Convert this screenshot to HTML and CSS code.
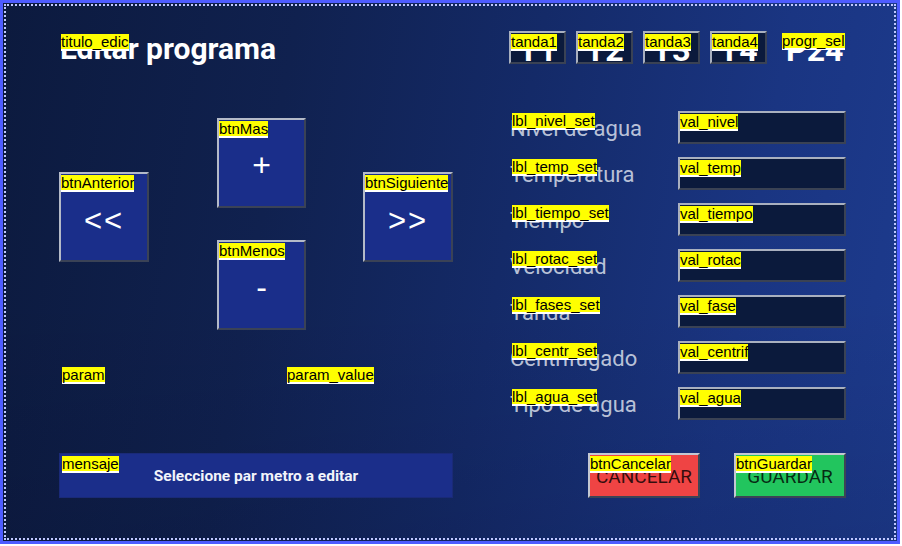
FILE: index.html
```html
<!DOCTYPE html>
<html lang="es">
<head>
<meta charset="utf-8">
<title>Editar programa</title>
<link rel="stylesheet" href="styles.css">
</head>
<body>
<div class="screen">
  <div class="title w plain"><span class="tag">titulo_edic</span>Editar programa</div>

  <div class="tandas">
    <div class="tanda w"><span class="tag">tanda1</span>T1</div>
    <div class="tanda w"><span class="tag">tanda2</span>T2</div>
    <div class="tanda w"><span class="tag">tanda3</span>T3</div>
    <div class="tanda w"><span class="tag">tanda4</span>T4</div>
    <div class="progr w plain"><span class="tag">progr_sel</span>P24</div>
  </div>

  <div class="left-body">
    <div class="cluster">
      <div class="col col-side">
        <div class="btn w"><span class="tag">btnAnterior</span><span class="sym arrows">&lt;&lt;</span></div>
      </div>
      <div class="col col-mid">
        <div class="btn btn-mid w"><span class="tag">btnMas</span><span class="sym">+</span></div>
        <div class="btn btn-mid w"><span class="tag">btnMenos</span><span class="sym">-</span></div>
      </div>
      <div class="col col-side">
        <div class="btn w"><span class="tag">btnSiguiente</span><span class="sym arrows">&gt;&gt;</span></div>
      </div>
    </div>
    <div class="params">
      <div class="param w plain"><span class="tag">param</span></div>
      <div class="param param-value w plain"><span class="tag">param_value</span></div>
    </div>
  </div>

  <div class="right-body">
    <div class="row"><div class="label w plain"><span class="tag">lbl_nivel_set</span>Nivel de agua</div><div class="val w"><span class="tag">val_nivel</span></div></div>
    <div class="row"><div class="label w plain"><span class="tag">lbl_temp_set</span>Temperatura</div><div class="val w"><span class="tag">val_temp</span></div></div>
    <div class="row"><div class="label w plain"><span class="tag">lbl_tiempo_set</span>Tiempo</div><div class="val w"><span class="tag">val_tiempo</span></div></div>
    <div class="row"><div class="label w plain"><span class="tag">lbl_rotac_set</span>Velocidad</div><div class="val w"><span class="tag">val_rotac</span></div></div>
    <div class="row"><div class="label w plain"><span class="tag">lbl_fases_set</span>Tanda</div><div class="val w"><span class="tag">val_fase</span></div></div>
    <div class="row"><div class="label w plain"><span class="tag">lbl_centr_set</span>Centrifugado</div><div class="val w"><span class="tag">val_centrif</span></div></div>
    <div class="row"><div class="label w plain"><span class="tag">lbl_agua_set</span>Tipo de agua</div><div class="val w"><span class="tag">val_agua</span></div></div>
  </div>

  <div class="mensaje w"><span class="tag">mensaje</span>Seleccione par metro a editar</div>

  <div class="actions">
    <div class="act cancel w"><span class="tag">btnCancelar</span>CANCELAR</div>
    <div class="act save w"><span class="tag">btnGuardar</span>GUARDAR</div>
  </div>
</div>
</body>
</html>
```
FILE: styles.css
```css
* { box-sizing: border-box; }

html, body {
  margin: 0;
  padding: 0;
  background: #ffffff;
}

.screen {
  width: 900px;
  height: 544px;
  border: 3px solid #4e5cff;
  outline: 2px dotted #c0c8ff;
  outline-offset: -6px;
  background:
    linear-gradient(to bottom, rgba(0, 0, 20, 0) 55%, rgba(0, 0, 20, 0.12) 100%),
    linear-gradient(100deg, #0c1a3e 0%, #10214f 30%, #142a68 55%, #1a3582 80%, #1d3b8e 100%);
  display: grid;
  grid-template-columns: 394px 337px;
  grid-template-rows: 33px 389px 45px;
  column-gap: 56px;
  padding: 28px 0 0 56px;
  font-family: Roboto, "Liberation Sans", sans-serif;
  color: #ffffff;
}

/* designer name tags */
.w { position: relative; }
.tag {
  position: absolute;
  top: 1px;
  left: 0;
  background: #ffff00;
  color: #000000;
  font: 400 15px/15px "Liberation Sans", Arial, sans-serif;
  border-bottom: 2px solid #ffffff;
  white-space: nowrap;
  z-index: 2;
}
.plain > .tag { top: 0; left: 2px; }

/* header */
.title {
  margin-top: 3px;
  padding-left: 1px;
  font-weight: 700;
  font-size: 30px;
  line-height: 30px;
  white-space: nowrap;
}

.tandas {
  display: flex;
  gap: 10px;
  align-items: flex-start;
}
.tanda {
  flex: 0 0 57px;
  height: 33px;
  background: #0b1a3c;
  border: 2px solid;
  border-color: #a9b0bf #3a4254 #3a4254 #a9b0bf;
  display: flex;
  align-items: center;
  justify-content: center;
  padding-top: 4px;
  font-weight: 700;
  font-size: 32px;
  line-height: 1;
}
.progr {
  flex: 0 0 auto;
  margin-left: 3px;
  height: 33px;
  padding: 4px 0 0 6px;
  display: flex;
  align-items: center;
  font-weight: 700;
  font-size: 32px;
  line-height: 1;
}
.progr > .tag { top: 2px; left: 2px; }

/* left body */
.left-body {
  display: flex;
  flex-direction: column;
}
.cluster {
  display: flex;
  align-items: flex-start;
  margin-top: 54px;
}
.col { display: flex; flex-direction: column; }
.col-side { margin-top: 54px; }
.col-mid { gap: 32px; margin: 0 57px 0 68px; }

.btn {
  width: 90px;
  height: 90px;
  background: #1a2e8a;
  border: 2px solid;
  border-color: #b4bac8 #3a4256 #3a4256 #b4bac8;
  display: flex;
  align-items: center;
  justify-content: center;
  font-family: "Liberation Sans", Arial, sans-serif;
  color: #ffffff;
}
.btn-mid { width: 89px; }
.sym {
  font-size: 32px;
  line-height: 1;
  padding-top: 4px;
}
.arrows {
  font-size: 31px;
  letter-spacing: 2px;
  padding-top: 6px;
}

.params {
  display: flex;
  margin-top: 35px;
}
.param {
  height: 20px;
  width: 60px;
}
.param > .tag { left: 3px; top: 2px; }
.param-value { margin-left: 165px; width: 120px; }

/* right body */
.right-body {
  display: flex;
  flex-direction: column;
  gap: 13px;
  padding-top: 47px;
}
.row {
  display: flex;
  height: 33px;
  align-items: flex-start;
}
.label {
  width: 169px;
  height: 33px;
  padding: 5px 0 0 1px;
  font-size: 22px;
  line-height: 26px;
  color: rgba(222, 226, 238, 0.84);
  white-space: nowrap;
}
.label > .tag { top: 2px; left: 3px; }
.val {
  width: 168px;
  height: 33px;
  background: #0b1a3c;
  border: 2px solid;
  border-color: #a9b0bf #3a4254 #3a4254 #a9b0bf;
}
.val > .tag { top: 1px; left: 0; }

/* footer */
.mensaje {
  height: 45px;
  background: #1b2e8a;
  border: 1px solid #1a2a78;
  display: flex;
  align-items: center;
  justify-content: center;
  font-weight: 700;
  font-size: 15.5px;
  color: #f2f4fa;
}
.mensaje > .tag { top: 2px; left: 2px; }

.actions {
  display: flex;
  justify-content: flex-end;
  gap: 34px;
}
.act {
  width: 112px;
  height: 45px;
  border: 2px solid;
  border-color: #c4c8d2 #3c4456 #3c4456 #c4c8d2;
  display: flex;
  align-items: center;
  justify-content: center;
  font-size: 19px;
  color: rgba(0, 0, 0, 0.8);
  padding-top: 2px;
}
.cancel { background: #ef4444; }
.save { background: #22c55e; }
```
